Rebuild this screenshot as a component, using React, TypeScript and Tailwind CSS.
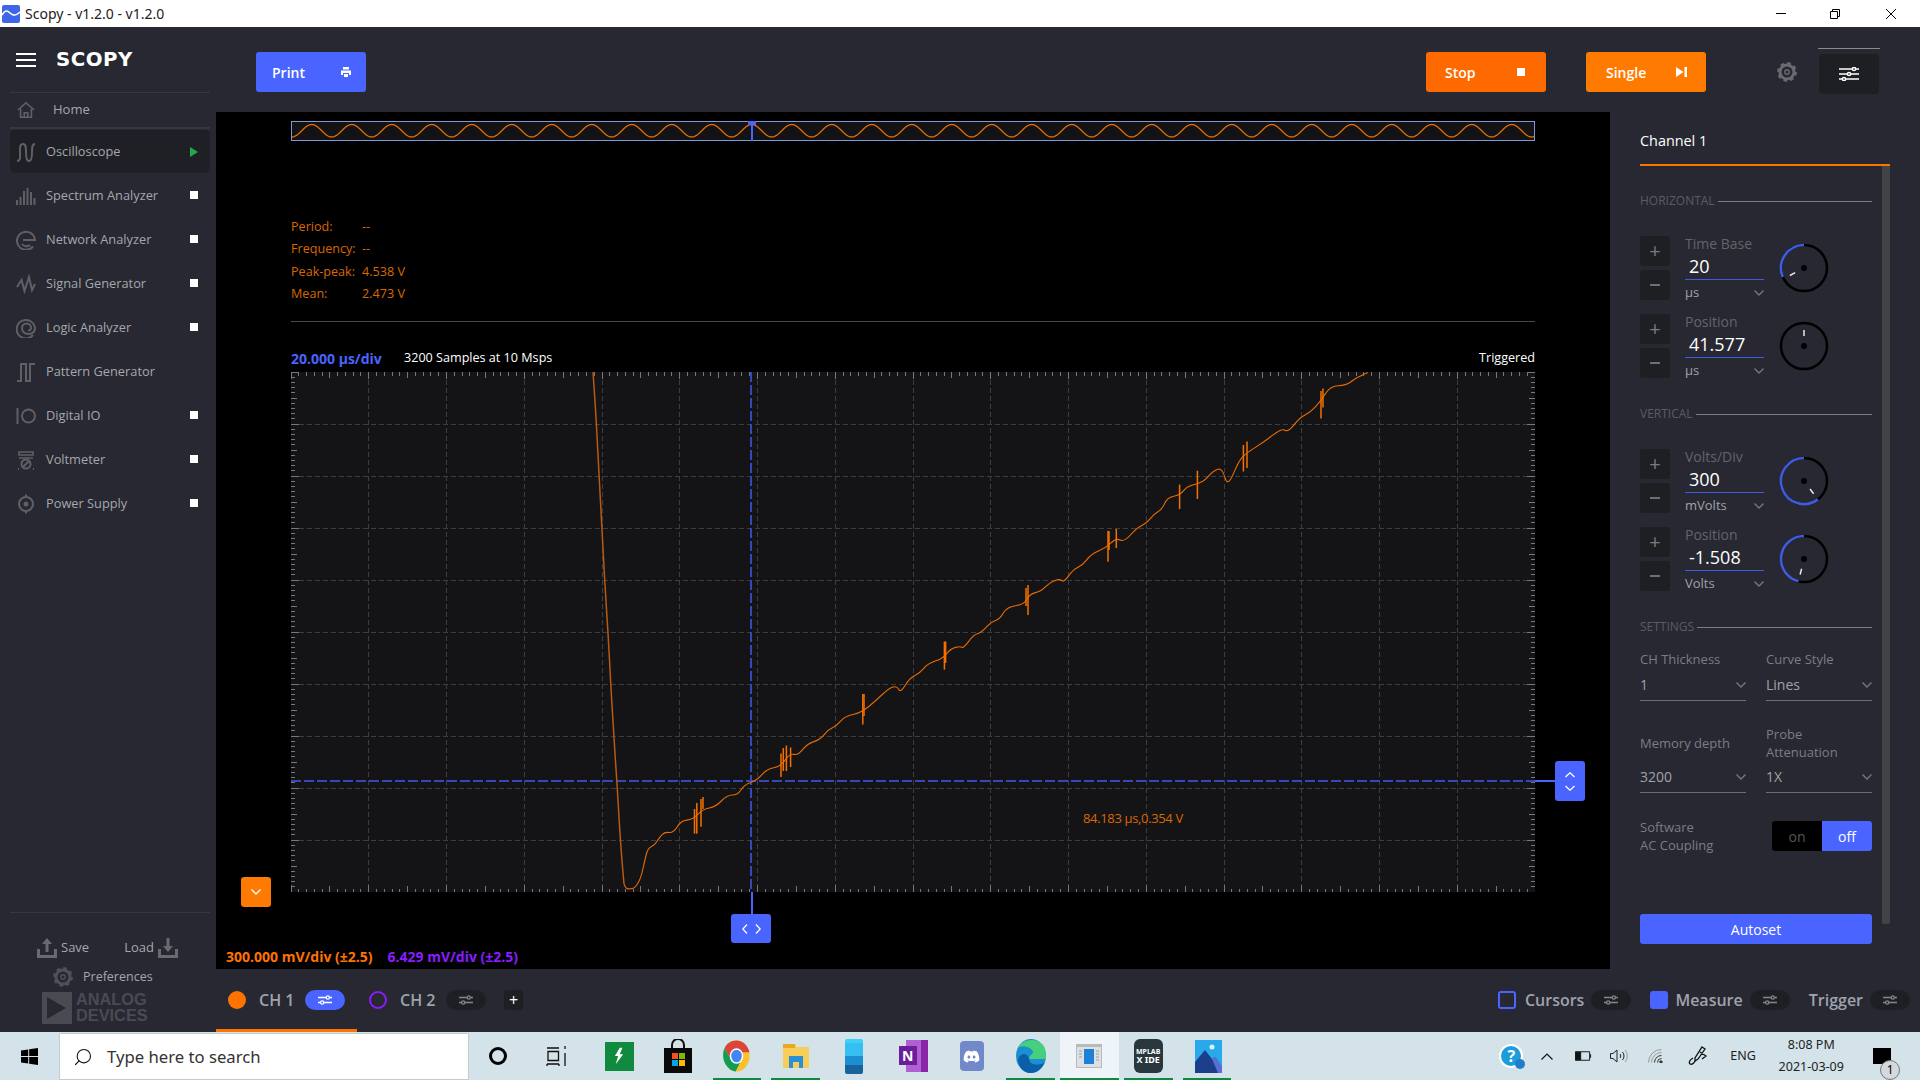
import { ReactNode } from 'react';
import { FaDiscord } from 'react-icons/fa';
import { Search } from 'lucide-react';

const FONT = { fontFamily: '"Open Sans", "Noto Sans", sans-serif' };

/* ---------- small icon helpers ---------- */

function SlidersIcon({ color = '#ffffff', className = 'w-[20px] h-[14px]' }: { color?: string; className?: string }) {
  return (
    <svg viewBox="0 0 20 14" className={className} fill="none" stroke={color} strokeWidth="1.5">
      <path d="M0 2h20M0 7h20M0 12h20" />
      <circle cx="15" cy="2" r="1.6" fill="#1e1f24" />
      <circle cx="10" cy="7" r="1.6" fill="#1e1f24" />
      <circle cx="5" cy="12" r="1.6" fill="#1e1f24" />
    </svg>
  );
}

function PillIcon({ color = '#8b8c92', size = 'w-[14px] h-[10px]' }: { color?: string; size?: string }) {
  return (
    <svg viewBox="0 0 14 10" className={size} fill="none" stroke={color} strokeWidth="1.3">
      <path d="M0 2.5h8M11.5 2.5H14M0 7.5h2.5M6 7.5h8" />
      <circle cx="9.8" cy="2.5" r="1.6" />
      <circle cx="4.2" cy="7.5" r="1.6" />
    </svg>
  );
}

function Pill({ active = false }: { active?: boolean }) {
  return (
    <div className={`w-[40px] h-[20px] rounded-full flex items-center justify-center ${active ? 'bg-[#4a64ff]' : 'bg-[#1e1f23]'}`}>
      <PillIcon color={active ? '#ffffff' : '#85868c'} />
    </div>
  );
}

function GearIcon({ size = 20, color = '#6a6b70' }: { size?: number; color?: string }) {
  return (
    <svg viewBox="0 0 20 20" width={size} height={size} fill="none" stroke={color}>
      <circle cx="10" cy="10" r="7" strokeWidth="3" />
      <circle cx="10" cy="10" r="8.6" strokeWidth="2.6" strokeDasharray="3.4 3.35" />
      <circle cx="10" cy="10" r="2.2" strokeWidth="1.4" />
    </svg>
  );
}

function Chevron({ color = '#76777d' }: { color?: string }) {
  return (
    <svg viewBox="0 0 10 6" className="w-[10px] h-[6px]" fill="none" stroke={color} strokeWidth="1.4">
      <path d="M0.5 0.5 5 5 9.5 0.5" />
    </svg>
  );
}

const sideIcons: Record<string, ReactNode> = {
  osc: <path d="M1 19c4 0 3-4 3-9s0-8 3-8 3 4 3 8 0 9 3 9 3-5 3-9 0-8 3-8" />,
  spectrum: <path d="M1 19v-5M4.5 19v-8M8 19V5M11.5 19V2M15 19V6M18.5 19v-7" />,
  network: (
    <>
      <path d="M17 16.5A9 9 0 1 1 19 10H7" />
      <path d="M14 15a5.4 5.4 0 0 1-8-1" />
    </>
  ),
  signal: <path d="M1 13 5.500 6l3 11L13 3l3 13 3-6" />,
  logic: (
    <>
      <path d="M17 17A9.200 9.200 0 1 1 19 10c0 4-3 6-7 6a6 6 0 0 1-6-6 4.500 4.500 0 0 1 9 0c0 2-1.500 2.500-3 2.500" />
    </>
  ),
  pattern: <path d="M1 19h4V2h5v17h4V2h5" />,
  digital: (
    <>
      <path d="M1.500 2v16" />
      <circle cx="12.500" cy="10" r="6.500" />
    </>
  ),
  volt: (
    <>
      <path d="M3 2h14v3H3zM3 8h14" strokeWidth="1.600" />
      <circle cx="10" cy="14" r="4.500" />
      <path d="M7 17l6-6M2 19h1M17 19h1" />
    </>
  ),
  power: (
    <>
      <circle cx="10" cy="10" r="7" />
      <circle cx="10" cy="10" r="1.500" fill="#5f6066" />
      <path d="M10 0.500V3M10 17v2.500" />
    </>
  ),
};

function SideIcon({ name }: { name: string }) {
  return (
    <svg viewBox="0 0 20 20" className="w-[20px] h-[20px] shrink-0" fill="none" stroke="#5f6066" strokeWidth="2">
      {sideIcons[name]}
    </svg>
  );
}

/* ---------- sidebar ---------- */

const tools = [
  { name: 'Oscilloscope', icon: 'osc', state: 'run' },
  { name: 'Spectrum Analyzer', icon: 'spectrum', state: 'stop' },
  { name: 'Network Analyzer', icon: 'network', state: 'stop' },
  { name: 'Signal Generator', icon: 'signal', state: 'stop' },
  { name: 'Logic Analyzer', icon: 'logic', state: 'stop' },
  { name: 'Pattern Generator', icon: 'pattern', state: 'none' },
  { name: 'Digital IO', icon: 'digital', state: 'stop' },
  { name: 'Voltmeter', icon: 'volt', state: 'stop' },
  { name: 'Power Supply', icon: 'power', state: 'stop' },
];

function Sidebar() {
  return (
    <aside className="w-[216px] shrink-0 bg-[#272831] flex flex-col">
      <div className="ml-[10px] mr-[6px] h-[66px] border-b border-[#36373f] flex items-center pl-[6px] shrink-0">
        <div className="w-[20px] flex flex-col gap-[4px]">
          <div className="h-[2px] bg-white" />
          <div className="h-[2px] bg-white" />
          <div className="h-[2px] bg-white" />
        </div>
        <span className="ml-[20px] text-white text-[19px] font-bold tracking-[0.5px] scale-x-[1.04] origin-left" style={{ fontFamily: '"DejaVu Sans", sans-serif' }}>
          SCOPY
        </span>
      </div>

      <div className="ml-[10px] mr-[6px] h-[36px] border-b-2 border-[#36373f] flex items-center pl-[6px] shrink-0">
        <svg viewBox="0 0 20 20" className="w-[20px] h-[18px]" fill="none" stroke="#5f6066" strokeWidth="1.800">
          <path d="M1 10 10 2l9 8M4 9v9h12V9M8 18v-5h4v5" />
        </svg>
        <span className="ml-[17px] text-[13px] text-[#a5a7ad]">Home</span>
      </div>

      <div className="ml-[10px] mr-[6px] mt-[1px] flex flex-col gap-[1px]">
        {tools.map((t) => (
          <div key={t.name} className={`h-[43px] flex items-center pl-[6px] rounded-[5px] ${t.state === 'run' ? 'bg-[#1f2026]' : ''}`}>
            <SideIcon name={t.icon} />
            <span className="ml-[10px] text-[12.800px] text-[#a5a7ad] flex-1">{t.name}</span>
            {t.state === 'run' && (
              <svg viewBox="0 0 8 10" className="w-[8px] h-[10px] mr-[12px]">
                <path d="M0 0l8 5-8 5z" fill="#22a84a" />
              </svg>
            )}
            {t.state === 'stop' && <div className="w-[8px] h-[8px] bg-white mr-[12px] mb-[1px]" />}
          </div>
        ))}
      </div>

      <div className="mt-auto ml-[10px] mr-[6px] border-t border-[#36373f] pt-[25px] pb-[8px] flex flex-col">
        <div className="h-[20px] flex items-center text-[13px] text-[#a5a7ad]">
          <svg viewBox="0 0 20 20" className="w-[20px] h-[20px] ml-[27px]" fill="#6a6b70">
            <path d="M0 11h3v6h14v-6h3v9H0zM10 0l5 6h-3.500v8h-3V6H5z" />
          </svg>
          <span className="ml-[4px]">Save</span>
          <span className="ml-[35px]">Load</span>
          <svg viewBox="0 0 20 20" className="w-[20px] h-[20px] ml-[4px]" fill="#6a6b70">
            <path d="M0 11h3v6h14v-6h3v9H0zM10 14l5-6h-3.500V0h-3v8H5z" />
          </svg>
        </div>
        <div className="mt-[9px] h-[20px] flex items-center text-[12.500px] text-[#a5a7ad]">
          <div className="ml-[43px]">
            <GearIcon size={20} color="#505157" />
          </div>
          <span className="ml-[10px]">Preferences</span>
        </div>
        <div className="mt-[5px] ml-[32px] h-[32px] flex items-center">
          <svg viewBox="0 0 30 32" className="w-[30px] h-[32px]">
            <path fillRule="evenodd" d="M0 0h30v32H0zM5 5v22l19-11z" fill="#4a4b52" />
          </svg>
          <div className="ml-[4px] text-[17px] leading-[16px] font-bold text-[#4a4b52] scale-x-[0.96] origin-left" style={{ fontFamily: '"Liberation Sans", sans-serif' }}>
            ANALOG
            <br />
            DEVICES
          </div>
        </div>
      </div>
    </aside>
  );
}

/* ---------- top toolbar ---------- */

function Toolbar() {
  return (
    <div className="h-[85px] shrink-0 bg-[#272831] flex items-start pt-[25px]">
      <button className="ml-[40px] w-[110px] h-[40px] rounded-[3px] bg-[#4a64ff] flex items-center pl-[16px] pr-[15px] justify-between text-white text-[14px] font-semibold">
        Print
        <svg viewBox="0 0 10 10" className="w-[10px] h-[10px]" fill="#ffffff">
          <path d="M2 0h6v2.500H2zM0 3.500h10V8H8V6H2v2H0zM3 7h4v3H3z" />
        </svg>
      </button>
      <button className="ml-auto w-[120px] h-[40px] rounded-[3px] bg-[#ff6a00] flex items-center pl-[19px] pr-[21px] justify-between text-white text-[14px] font-semibold">
        Stop
        <span className="w-[8px] h-[8px] bg-white" />
      </button>
      <button className="ml-[40px] w-[120px] h-[40px] rounded-[3px] bg-[#ff7a00] flex items-center pl-[20px] pr-[19px] justify-between text-white text-[14px] font-semibold">
        Single
        <svg viewBox="0 0 11 10" className="w-[11px] h-[10px]" fill="#ffffff">
          <path d="M0 0l7.500 5L0 10zM8.500 0H11v10H8.500z" />
        </svg>
      </button>
      <div className="ml-[71px] h-[40px] flex items-center">
        <GearIcon />
      </div>
      <div className="relative ml-[22px] mr-[41px] mt-[2px] w-[60px] h-[40px] rounded-[4px] bg-[#1e1f23] flex items-center justify-center">
        <div className="absolute -top-[6px] -left-px -right-px h-px bg-[#8a8b90]" />
        <SlidersIcon />
      </div>
    </div>
  );
}

/* ---------- scope plot ---------- */

const PW = 1244;
const PH = 520;
const OX = 291;
const OY = 372;

const curve: [number, number][] = [
  [624, 884], [625.7, 888.7], [630, 889], [635, 888], [641, 878], [644.8, 860], [648, 848], [654.4, 845.5], [660, 836.5],
  [664.7, 832], [673.5, 833], [681, 820.6], [692.6, 819.5], [703, 809], [715.6, 807], [727, 795], [737.8, 795],
  [744, 785], [757, 780.3], [767, 769], [780.6, 766.5], [790, 753.4], [798, 755.4], [807.5, 743.5], [820.4, 739.6],
  [828, 729.7], [836.7, 725.8], [845, 716], [861, 713], [876.5, 700], [889.3, 688], [897, 686], [900.5, 693],
  [909.7, 678], [920, 673], [927.6, 663.7], [943, 658.5], [950.5, 648.7], [960.7, 646], [963, 648.7], [973.5, 634.8],
  [981, 632.8], [991.3, 621.8], [1000, 619], [1006.6, 607], [1024.5, 604.4], [1029.6, 594], [1041.3, 591.3],
  [1050, 582], [1060, 578.7], [1063.8, 582.6], [1073, 569.6], [1083, 564.8], [1090.8, 554.5], [1106, 547.8],
  [1116.3, 538], [1124, 542], [1136.7, 528], [1147, 523], [1154.6, 513.4], [1162, 509.5], [1167.3, 497.6], [1180, 495],
  [1187.8, 485.7], [1203, 482.6], [1213.3, 470.7], [1222.4, 468], [1227.6, 487.3], [1238.8, 460.8], [1246.4, 453],
  [1264.3, 441.8], [1282, 428], [1288, 432.4], [1300, 417.3], [1310, 412.6], [1320.4, 401.5], [1330.6, 385.7],
  [1346, 385.7], [1356, 377.8], [1367.9, 372.6],
];

const steep: [number, number][] = [
  [593, 372], [595.8, 411], [599, 476], [602, 528], [604.6, 580], [608, 632], [610.7, 684], [613.8, 736], [616.9, 781],
  [620.3, 840], [624, 884],
];

const spikes: [number, number, number][] = [
  [694.5, 809, 833.7], [696.8, 803, 833.7], [701, 799, 826.7], [703, 797, 809],
  [781, 753.4, 777], [783.3, 748, 771], [786.4, 745.5, 771], [790.6, 747.5, 767],
  [862.8, 694, 724.6], [864, 694, 716], [944.4, 641.5, 669.6], [945.6, 641.5, 663], [1028, 585, 615], [1026, 588, 606],
  [1108, 531, 561.7], [1109, 531, 550], [1116.3, 529, 548], [1179.6, 484.6, 509], [1197.4, 470.7, 499],
  [1243.4, 445, 471.5], [1247, 441.5, 468], [1321, 391, 418.5], [1323, 388.5, 407.5],
];

// rounds the traced points off through their midpoints
const toSmoothPath = (pts: [number, number][]) => {
  const p = pts.map(([x, y]) => [x - OX, y - OY]);
  let d = `M${p[0][0].toFixed(1)} ${p[0][1].toFixed(1)}`;
  for (let i = 1; i < p.length - 1; i += 1) {
    const mx = (p[i][0] + p[i + 1][0]) / 2;
    const my = (p[i][1] + p[i + 1][1]) / 2;
    d += `Q${p[i][0].toFixed(1)} ${p[i][1].toFixed(1)} ${mx.toFixed(1)} ${my.toFixed(1)}`;
  }
  const last = p[p.length - 1];
  return `${d}L${last[0].toFixed(1)} ${last[1].toFixed(1)}`;
};

function PlotSvg() {
  const divX = PW / 16;
  const divY = PH / 10;
  const stepX = divX / 10;
  const stepY = divY / 10;
  const xTicks = Array.from({ length: 160 }, (_, i) => i);
  const yTicks = Array.from({ length: 100 }, (_, i) => i);
  return (
    <svg width={PW} height={PH} className="block">
      <rect width={PW} height={PH} fill="#141417" />
      <g stroke="#3e3e40" strokeDasharray="5 3" shapeRendering="crispEdges">
        {Array.from({ length: 15 }, (_, i) => (
          <line key={i} x1={(i + 1) * divX} x2={(i + 1) * divX} y1={0} y2={PH} />
        ))}
        {Array.from({ length: 9 }, (_, i) => (
          <line key={i} y1={(i + 1) * divY} y2={(i + 1) * divY} x1={0} x2={PW} />
        ))}
      </g>
      <g stroke="#77777a" shapeRendering="crispEdges">
        {xTicks.map((i) => {
          const len = i % 10 === 0 ? 7 : i % 5 === 0 ? 6 : 3.5;
          const x = i * stepX;
          return (
            <g key={i}>
              <line x1={x} x2={x} y1={0} y2={len} />
              <line x1={x} x2={x} y1={PH - len} y2={PH} />
            </g>
          );
        })}
        {yTicks.map((i) => {
          const len = i % 10 === 0 ? 8 : i % 5 === 0 ? 6 : 4;
          const y = i * stepY;
          return (
            <g key={i}>
              <line y1={y} y2={y} x1={0} x2={len} />
              <line y1={y} y2={y} x1={PW - len} x2={PW} />
            </g>
          );
        })}
      </g>
      <g stroke="#3448b8" strokeWidth="2" strokeDasharray="10 3" fill="none">
        <line x1={0} x2={PW} y1={409} y2={409} />
        <line x1={460} x2={460} y1={0} y2={PH} />
      </g>
      <path d={toSmoothPath(steep)} fill="none" stroke="#b85a10" strokeWidth="1.500" />
      <path d={toSmoothPath(curve)} fill="none" stroke="#e96c00" strokeWidth="1.100" />
      <g stroke="#f57000" strokeWidth="1.500">
        {spikes.map(([x, a, b], i) => (
          <line key={i} x1={x - OX} x2={x - OX} y1={a - OY} y2={b - OY} />
        ))}
      </g>
    </svg>
  );
}

function Minimap() {
  let d = '';
  for (let x = 1; x <= PW - 1; x += 1) {
    const y = 9.75 - 6.25 * Math.cos(((x - 20.7) / 40) * Math.PI * 2);
    d += `${x === 1 ? 'M' : 'L'}${x} ${y.toFixed(2)}`;
  }
  return (
    <svg width={PW} height={20} className="block mt-[9px] shrink-0">
      <rect x="0.500" y="0.500" width={PW - 1} height="19" fill="#131316" stroke="#7c9ad6" />
      <path d={d} fill="none" stroke="#e36c00" strokeWidth="1.300" />
      <rect x="457" y="0" width="8" height="4" fill="#4a64ff" />
      <rect x="460" y="0" width="2" height="20" fill="#4a64ff" />
    </svg>
  );
}

const measures = [
  ['Period:', '--'],
  ['Frequency:', '--'],
  ['Peak-peak:', '4.538 V'],
  ['Mean:', '2.473 V'],
];

function ScopeArea() {
  return (
    <div className="relative w-[1394px] shrink-0 bg-black pl-[75px] flex flex-col">
      <Minimap />

      <div className="mt-[75px] flex flex-col text-[12.600px] text-[#d96800]">
        {measures.map(([k, v]) => (
          <div key={k} className="h-[22.5px] flex items-center">
            <span className="w-[71px]">{k}</span>
            <span>{v}</span>
          </div>
        ))}
      </div>

      <div className="mt-[15px] w-[1244px] h-px bg-[#4a4a4c]" />

      <div className="mt-[26px] w-[1244px] h-[20px] flex items-center text-[12.600px] text-white">
        <span className="w-[113px] text-[14px] font-bold text-[#4a64ff]">20.000 μs/div</span>
        <span>3200 Samples at 10 Msps</span>
        <span className="ml-auto">Triggered</span>
      </div>

      <div className="relative mt-[4px] w-[1244px] h-[520px]">
        <PlotSvg />
        <span className="absolute left-[792px] top-[437px] text-[13px] tracking-[-0.350px] text-[#d96800] whitespace-nowrap">84.183 μs,0.354 V</span>
      </div>

      <div className="mt-[57px] -ml-[65px] flex gap-[15px] text-[14px] font-bold leading-[16px]">
        <span className="text-[#ff7200]">300.000 mV/div (±2.5)</span>
        <span className="text-[#8a1cff]">6.429 mV/div (±2.5)</span>
      </div>

      {/* handles sit over the plot */}
      <div className="absolute left-[25px] top-[765px] w-[30px] h-[30px] rounded-[3px] bg-[#ff7a00] flex items-center justify-center">
        <Chevron color="#ffffff" />
      </div>
      <div className="absolute left-[535px] top-[780px] w-[1.500px] h-[22px] bg-[#4a64ff]" />
      <div className="absolute left-[515px] top-[802px] w-[40px] h-[29px] rounded-[3px] bg-[#4a64ff] flex items-center justify-center gap-[7px]">
        <svg viewBox="0 0 6 10" className="w-[6px] h-[10px]" fill="none" stroke="#fff" strokeWidth="1.300">
          <path d="M5 0.500 0.800 5 5 9.500" />
        </svg>
        <svg viewBox="0 0 6 10" className="w-[6px] h-[10px]" fill="none" stroke="#fff" strokeWidth="1.300">
          <path d="M1 0.500 5.200 5 1 9.500" />
        </svg>
      </div>
      <div className="absolute left-[1319px] top-[668px] w-[20px] h-[2px] bg-[#4a64ff]" />
      <div className="absolute left-[1339px] top-[649px] w-[30px] h-[40px] rounded-[3px] bg-[#4a64ff] flex flex-col items-center justify-center gap-[7px]">
        <svg viewBox="0 0 10 6" className="w-[10px] h-[6px]" fill="none" stroke="#fff" strokeWidth="1.300">
          <path d="M0.500 5 5 0.800 9.500 5" />
        </svg>
        <svg viewBox="0 0 10 6" className="w-[10px] h-[6px]" fill="none" stroke="#fff" strokeWidth="1.300">
          <path d="M0.500 1 5 5.200 9.500 1" />
        </svg>
      </div>
    </div>
  );
}

/* ---------- right panel ---------- */

function Knob({ arc, tick }: { arc?: number; tick: number }) {
  const c = 26;
  const r = 23;
  const pt = (deg: number, rad: number) => {
    const a = (deg * Math.PI) / 180;
    return [c + rad * Math.sin(a), c - rad * Math.cos(a)];
  };
  let arcPath = '';
  if (arc !== undefined) {
    const [sx, sy] = pt(arc, r);
    const large = 360 - arc > 180 ? 1 : 0;
    arcPath = `M${sx.toFixed(2)} ${sy.toFixed(2)}A${r} ${r} 0 ${large} 1 ${c} ${c - r}`;
  }
  const [x1, y1] = pt(tick, 10);
  const [x2, y2] = pt(tick, 16);
  return (
    <svg width="52" height="52" className="shrink-0">
      <circle cx={c} cy={c} r={r} fill="none" stroke="#000000" strokeWidth="2.500" />
      {arcPath && <path d={arcPath} fill="none" stroke="#3f5be0" strokeWidth="2.600" />}
      <line x1={x1} y1={y1} x2={x2} y2={y2} stroke="#e8e8e8" strokeWidth="1.500" />
      <circle cx={c} cy={c} r="3" fill="#000000" />
    </svg>
  );
}

function Control(props: { label: string; value: string; unit: string; arc?: number; tick: number }) {
  return (
    <div className="h-[64px] flex items-start">
      <div className="w-[30px] flex flex-col gap-[4px]">
        <div className="h-[30px] rounded-[3px] bg-[#1e1f23] flex items-center justify-center text-[#7a7b80] text-[20px] leading-none">+</div>
        <div className="h-[30px] rounded-[3px] bg-[#1e1f23] flex items-center justify-center">
          <div className="w-[10px] h-[2px] bg-[#6e6f74]" />
        </div>
      </div>
      <div className="ml-[15px] w-[79px] flex flex-col">
        <div className="h-[14px] flex items-center text-[14px] text-[#63646b]">{props.label}</div>
        <div className="h-[30px] border-b border-[#3f5be0] pl-[4px] pt-[3px] flex items-center text-[18px] text-white">{props.value}</div>
        <div className="h-[26px] flex items-center justify-between text-[13px] text-[#a0a2a6]">
          {props.unit}
          <Chevron />
        </div>
      </div>
      <div className="ml-[14px] mt-[6px]">
        <Knob arc={props.arc} tick={props.tick} />
      </div>
    </div>
  );
}

function SectionHead({ title, className }: { title: string; className: string }) {
  return (
    <div className={`h-[14px] flex items-center gap-[3px] ${className}`}>
      <span className="text-[12px] text-[#5b5c63]">{title}</span>
      <div className="flex-1 h-px bg-[#7d7d80]" />
    </div>
  );
}

function SelectBox({ value, h }: { value: string; h: string }) {
  return (
    <div className={`${h} border-b border-[#6c6d72] flex items-center justify-between text-[14px] text-[#a0a2a6]`}>
      {value}
      <Chevron />
    </div>
  );
}

function SettingsPanel() {
  return (
    <div className="w-[310px] shrink-0 bg-[#272831] pl-[30px] pr-[30px] flex flex-col">
      <div className="h-[54px] shrink-0 border-b-2 border-[#ff7200] flex items-center text-[14.400px] text-white pt-[6px]">Channel 1</div>
      <div className="relative flex-1 w-[232px]">
        <div className="absolute left-[242px] top-0 w-[8px] h-[758px] rounded-b-[2px] bg-[#424345]" />

        <SectionHead title="HORIZONTAL" className="mt-[28px]" />
        <div className="mt-[28px]">
          <Control label="Time Base" value="20" unit="μs" arc={247} tick={242} />
        </div>
        <div className="mt-[14px]">
          <Control label="Position" value="41.577" unit="μs" tick={0} />
        </div>

        <SectionHead title="VERTICAL" className="mt-[29px]" />
        <div className="mt-[28px]">
          <Control label="Volts/Div" value="300" unit="mVolts" arc={143} tick={143} />
        </div>
        <div className="mt-[14px]">
          <Control label="Position" value="-1.508" unit="Volts" arc={194} tick={194} />
        </div>

        <SectionHead title="SETTINGS" className="mt-[29px]" />

        <div className="mt-[17px] grid grid-cols-[106px_106px] gap-x-[20px]">
          <div className="h-[18px] flex items-center text-[13px] text-[#7c7d83]">CH Thickness</div>
          <div className="h-[18px] flex items-center text-[13px] text-[#7c7d83]">Curve Style</div>
          <SelectBox value="1" h="h-[32px]" />
          <SelectBox value="Lines" h="h-[32px]" />
          <div className="mt-[23px] h-[37px] pt-[2px] flex items-center text-[13px] text-[#7c7d83]">Memory depth</div>
          <div className="mt-[23px] h-[37px] flex items-center text-[13px] leading-[18px] text-[#7c7d83]">
            Probe
            <br />
            Attenuation
          </div>
          <SelectBox value="3200" h="h-[32px]" />
          <SelectBox value="1X" h="h-[32px]" />
        </div>

        <div className="mt-[28px] h-[30px] flex items-center justify-between">
          <div className="text-[13px] leading-[18px] text-[#7c7d83]">
            Software
            <br />
            AC Coupling
          </div>
          <div className="w-[100px] h-[30px] flex text-[14px] rounded-[3px] overflow-hidden">
            <div className="w-[50px] bg-black text-[#55565b] flex items-center justify-center">on</div>
            <div className="w-[50px] bg-[#4a64ff] text-white flex items-center justify-center">off</div>
          </div>
        </div>

        <button className="mt-[63px] w-[232px] h-[30px] rounded-[3px] bg-[#4a64ff] text-white text-[14px]">Autoset</button>
      </div>
    </div>
  );
}

/* ---------- bottom channel bar ---------- */

function ChannelBar() {
  return (
    <div className="h-[63px] shrink-0 bg-[#272831] flex items-stretch text-[16px] font-semibold text-[#9ea3ad]">
      <div className="w-[141px] border-t-[2px] border-b-[3px] border-t-transparent border-b-[#ff7200] flex items-center pl-[12px]">
        <div className="w-[18px] h-[18px] rounded-full bg-[#ff7200]" />
        <span className="ml-[13px] w-[46px]">CH 1</span>
        <Pill active />
      </div>
      <div className="ml-[12px] pb-[1px] flex items-center">
        <div className="w-[18px] h-[18px] rounded-full border-2 border-[#8a1cff]" />
        <span className="ml-[13px] w-[46px]">CH 2</span>
        <Pill />
        <div className="ml-[18px] w-[19px] h-[20px] rounded-[3px] bg-[#1e1f23] flex items-center justify-center text-white text-[16px] font-normal">+</div>
      </div>
      <div className="ml-auto pb-[1px] flex items-center pr-[10px]">
        <div className="w-[18px] h-[18px] rounded-[3px] border-2 border-[#4a64ff]" />
        <span className="ml-[9px] mr-[7px]">Cursors</span>
        <Pill />
        <div className="ml-[19px] w-[18px] h-[18px] rounded-[3px] bg-[#4a64ff]" />
        <span className="ml-[7px] mr-[7px]">Measure</span>
        <Pill />
        <span className="ml-[19px] mr-[7px]">Trigger</span>
        <Pill />
      </div>
    </div>
  );
}

/* ---------- windows chrome ---------- */

function TitleBar() {
  return (
    <div className="h-[27px] shrink-0 bg-white flex items-center">
      <svg viewBox="0 0 18 18" className="ml-[2px] w-[18px] h-[18px]">
        <rect width="18" height="18" rx="2" fill="#3f66e8" />
        <path d="M0 10c3-5 5-5 8-2s6 3 10-1" fill="none" stroke="#fff" strokeWidth="1.500" />
      </svg>
      <span className="ml-[5px] text-[14px] text-[#222]" style={{ fontFamily: '"Noto Sans", sans-serif' }}>
        Scopy - v1.2.0 - v1.2.0
      </span>
      <svg viewBox="0 0 10 1" className="ml-auto w-[10px] h-px" fill="#000">
        <rect width="10" height="1" />
      </svg>
      <svg viewBox="0 0 10 10" className="ml-[44px] w-[10px] h-[10px]" fill="none" stroke="#000">
        <path d="M0.500 2.500h7v7h-7zM2.500 2.500v-2h7v7h-2" />
      </svg>
      <svg viewBox="0 0 10 10" className="ml-[46px] mr-[24px] w-[10px] h-[10px]" fill="none" stroke="#000">
        <path d="M0 0l10 10M10 0L0 10" />
      </svg>
    </div>
  );
}

function Tile({ children, running = false, active = false }: { children: ReactNode; running?: boolean; active?: boolean }) {
  return (
    <div className={`relative w-[58.750px] h-full flex items-center justify-center ${active ? 'bg-[#eef4f7]' : ''}`}>
      {children}
      {running && <div className={`absolute bottom-0 h-[2px] bg-[#0f8a3c] ${active ? 'left-0 right-0' : 'left-[5px] right-[5px]'}`} />}
    </div>
  );
}

function Taskbar() {
  return (
    <div className="h-[48px] shrink-0 bg-[#d3e3e9] flex items-stretch" style={{ fontFamily: '"Noto Sans", sans-serif' }}>
      <div className="w-[59px] flex items-center justify-center">
        <svg viewBox="0 0 16 16" className="w-[17px] h-[17px]" fill="#000">
          <path d="M0 2.300 6.800 1.300V7.500H0zM7.700 1.200 16 0v7.500H7.700zM0 8.500h6.800v6.200L0 13.700zM7.700 8.500H16V16l-8.300-1.200z" />
        </svg>
      </div>
      <div className="w-[410px] mt-[1px] bg-white flex items-center border border-[#c4ccd0] text-[#333]">
        <Search className="ml-[13px] w-[20px] h-[20px] -scale-x-100" strokeWidth={1.300} color="#111" />
        <span className="ml-[14px] text-[16.700px]">Type here to search</span>
      </div>
      <div className="w-[58px] flex items-center justify-center">
        <div className="w-[18px] h-[18px] rounded-full border-[3px] border-black" />
      </div>
      <div className="w-[63px] pr-[5px] flex items-center justify-center">
        <svg viewBox="0 0 20 22" className="w-[20px] h-[22px]" fill="none" stroke="#111" strokeWidth="1.300">
          <path d="M1 3h12M2 6.500h10.500v9H2zM1 19h12M1 19v2M13 19v2M19 1v3M19 8v13" />
        </svg>
      </div>
      <Tile>
        <div className="w-[29px] h-[29px] bg-[#108a3e] flex items-center justify-center">
          <svg viewBox="0 0 12 20" className="w-[10px] h-[18px]" fill="#ffffff">
            <path d="M7 0 1 10h4l-3 10 9-12H7l3-8z" />
          </svg>
        </div>
      </Tile>
      <Tile>
        <svg viewBox="0 0 28 34" className="w-[28px] h-[34px]">
          <path d="M8 12V6a6 6 0 0 1 12 0v6" fill="none" stroke="#111" strokeWidth="2" />
          <rect y="9" width="28" height="25" fill="#0a0a0a" />
          <rect x="8" y="14" width="6" height="6" fill="#f25022" />
          <rect x="15" y="14" width="6" height="6" fill="#7fba00" />
          <rect x="8" y="21" width="6" height="6" fill="#00a4ef" />
          <rect x="15" y="21" width="6" height="6" fill="#ffb900" />
        </svg>
      </Tile>
      <Tile running>
        <svg viewBox="0 0 28 32" className="w-[27px] h-[32px]">
          <ellipse cx="14" cy="16" rx="13.500" ry="16" fill="#fbc02d" />
          <path d="M14 0C8 0 3.500 3.500 1.500 8L8 19l2-7h17.500C25.500 4.500 20 0 14 0z" fill="#db4437" />
          <path d="M1.500 8C-.5 13-.5 20 3 25c2.500 4 6 6.500 10 7l5-10-8 .500z" fill="#0f9d58" />
          <ellipse cx="14" cy="16" rx="7" ry="8" fill="#ffffff" />
          <ellipse cx="14" cy="16" rx="5.500" ry="6.500" fill="#4285f4" />
        </svg>
      </Tile>
      <Tile running>
        <svg viewBox="0 0 26 26" className="w-[26px] h-[26px]">
          <path d="M0 1h12l2 3h12v21H0z" fill="#f7ce5a" />
          <path d="M0 1h12v4H0z" fill="#e8a726" />
          <path d="M6 13h14v12h-4v-6h-6v6H6z" fill="#2b8fd6" />
        </svg>
      </Tile>
      <Tile>
        <div className="w-[18px] h-[35px] rounded-[2px] overflow-hidden flex flex-col">
          <div className="h-[4px] bg-[#3ed0f5]" />
          <div className="flex-1 bg-[#37bff2]" />
          <div className="h-[9px] bg-[#1b8fcf]" />
          <div className="h-[9px] bg-[#17639c]" />
        </div>
      </Tile>
      <Tile>
        <div className="relative w-[29px] h-[32px]">
          <div className="absolute left-[7px] top-0 w-[22px] h-[32px] bg-[#b060d0]" />
          <div className="absolute left-[22px] top-0 w-[7px] h-[32px] bg-[#8a25a8]" />
          <div className="absolute left-0 top-[6px] w-[18px] h-[19px] bg-[#6b1f9c] text-white text-[14px] font-bold flex items-center justify-center">N</div>
        </div>
      </Tile>
      <Tile>
        <div className="w-[24px] h-[30px] rounded-[4px] bg-[#7289c9] flex items-center justify-center">
          <FaDiscord className="w-[17px] h-[17px] text-white" />
        </div>
      </Tile>
      <Tile running>
        <svg viewBox="0 0 30 34" className="w-[30px] h-[34px]">
          <ellipse cx="15" cy="17" rx="15" ry="17" fill="#1b8fd2" />
          <path d="M2 9C6 0 20-2 27 6c3 4 3 9 3 14H13c0-4 5-5 4-8-4-5-11-6-15-3z" fill="#47d07c" />
          <path d="M13 20c1 6 8 7 15 4-2 6-8 10-13 10-9 0-13-8-13-14 3-7 10-6 11 0z" fill="#0b5fa8" />
        </svg>
      </Tile>
      <Tile running active>
        <svg viewBox="0 0 26 24" className="w-[26px] h-[24px]">
          <rect x="0.500" y="0.500" width="25" height="23" fill="#dde1e3" stroke="#b5babd" />
          <rect x="1" y="1" width="24" height="2" fill="#b5babd" />
          <rect x="8" y="5" width="10" height="15" fill="#1f80d8" />
          <path d="M3 7h3M3 10h3M3 13h3M20 7h3M20 10h3M20 13h3M20 16h3" stroke="#9aa0a3" />
        </svg>
      </Tile>
      <Tile running>
        <div className="w-[29px] h-[34px] rounded-[6px] bg-[#27373d] flex flex-col items-center justify-center text-white font-bold text-[7px] leading-[8px]">
          <span>MPLAB</span>
          <span className="text-[9px]">X IDE</span>
        </div>
      </Tile>
      <Tile running>
        <div className="pl-[3px]">
          <svg viewBox="0 0 27 33" className="w-[27px] h-[33px]">
            <rect width="27" height="33" fill="#27a9ec" />
            <circle cx="17" cy="7" r="2.500" fill="#d8f2ff" />
            <path d="M0 33V22L10 10l7 9 3-2 7 10v6z" fill="#1b3f8a" />
            <path d="M17 19l3-2 7 9v7h-4z" fill="#5b6fd0" />
          </svg>
        </div>
      </Tile>

      <div className="ml-[263px] flex items-center text-[#222]">
        <div className="relative w-[24px] h-[24px] rounded-full bg-[#1e9bdc] border-2 border-white flex items-center justify-center text-white text-[16px] font-bold">
          ?
          <div className="absolute -right-[4px] -bottom-[3px] w-[10px] h-[10px] rounded-full bg-[#1e7fc8]" />
        </div>
        <svg viewBox="0 0 12 7" className="ml-[18px] w-[12px] h-[7px]" fill="none" stroke="#111" strokeWidth="1.200">
          <path d="M0.500 6.500 6 1l5.500 5.500" />
        </svg>
        <svg viewBox="0 0 18 10" className="ml-[22px] w-[17px] h-[10px]" fill="none" stroke="#111">
          <path d="M0.500 0.500h15v9H0.500zM16.500 3v4" />
          <rect x="1" y="1" width="5" height="8" fill="#111" />
        </svg>
        <svg viewBox="0 0 18 14" className="ml-[18px] w-[18px] h-[14px]" fill="none" stroke="#222">
          <path d="M0.500 4.500H3L7 1v12L3 9.500H0.500zM10 5c1 1 1 3 0 4M12.500 3c2 2 2 6 0 8" />
          <path d="M15 1c3 3 3 9 0 12" stroke="#999" />
        </svg>
        <svg viewBox="0 0 15 14" className="ml-[20px] w-[15px] h-[14px]" fill="none" stroke="#333">
          <path d="M0.500 13.500A13 13 0 0 1 13.500 0.500M3.500 13.500A10 10 0 0 1 13.500 3.500" stroke="#999" />
          <path d="M6.500 13.500A7 7 0 0 1 13.500 6.500M9.500 13.500a4 4 0 0 1 4-4" />
          <circle cx="13" cy="13" r="1.200" fill="#333" />
        </svg>
        <svg viewBox="0 0 20 20" className="ml-[25px] w-[20px] h-[20px]" fill="none" stroke="#111" strokeWidth="1.300">
          <path d="M14 1l3 2-7 10-3 2 0-3zM2 18c-2-2 1-5 3-6M12 6l6 4-4 3" />
          <path d="M2 18c2 1 4-1 5-3" />
        </svg>
        <span className="ml-[22px] text-[12.500px] w-[28px]">ENG</span>
        <div className="ml-[13px] w-[80px] text-center text-[12.500px] leading-[22px]">
          <div>8:08 PM</div>
          <div>2021-03-09</div>
        </div>
        <div className="relative ml-[22px] w-[18px] h-[16px] bg-black mb-[1px]">
          <div className="absolute left-[7px] top-[12px] w-[20px] h-[20px] rounded-full bg-[#d3d9dc] border border-[#777] flex items-center justify-center text-[12px] text-black">1</div>
        </div>
      </div>
    </div>
  );
}

export default function App() {
  return (
    <div className="w-[1920px] h-[1080px] flex flex-col overflow-hidden" style={FONT}>
      <TitleBar />
      <div className="flex-1 flex min-h-0">
        <Sidebar />
        <div className="flex-1 flex flex-col min-w-0">
          <Toolbar />
          <div className="flex-1 flex min-h-0">
            <ScopeArea />
            <SettingsPanel />
          </div>
          <ChannelBar />
        </div>
      </div>
      <Taskbar />
    </div>
  );
}
